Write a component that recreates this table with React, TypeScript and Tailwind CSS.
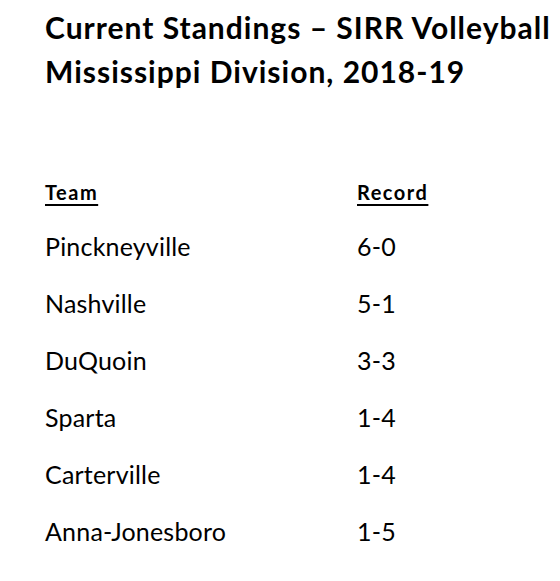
const teams = [
  { name: 'Pinckneyville', record: '6-0' },
  { name: 'Nashville', record: '5-1' },
  { name: 'DuQuoin', record: '3-3' },
  { name: 'Sparta', record: '1-4' },
  { name: 'Carterville', record: '1-4' },
  { name: 'Anna-Jonesboro', record: '1-5' },
];

export default function App() {
  return (
    <div className="min-h-[581px] w-[560px] bg-white pl-[45px] pt-[5px] text-black" style={{ fontFamily: 'Lato, "Open Sans", sans-serif' }}>
      <h1 className="text-[30px] font-bold leading-[44px] tracking-[1px]">
        Current Standings – SIRR Volleyball
        <br />
        Mississippi Division, 2018-19
      </h1>

      <div className="mt-[87px] grid grid-cols-[312px_1fr] text-[20px] font-bold leading-[24px] tracking-[1.5px]">
        <span className="underline decoration-2 underline-offset-4">Team</span>
        <span className="underline decoration-2 underline-offset-4">Record</span>
      </div>

      <div className="mt-[14px] flex flex-col">
        {teams.map((t) => (
          <div key={t.name} className="grid grid-cols-[312px_1fr] text-[25px] leading-[57px] tracking-[0.2px]">
            <span>{t.name}</span>
            <span>{t.record}</span>
          </div>
        ))}
      </div>
    </div>
  );
}
